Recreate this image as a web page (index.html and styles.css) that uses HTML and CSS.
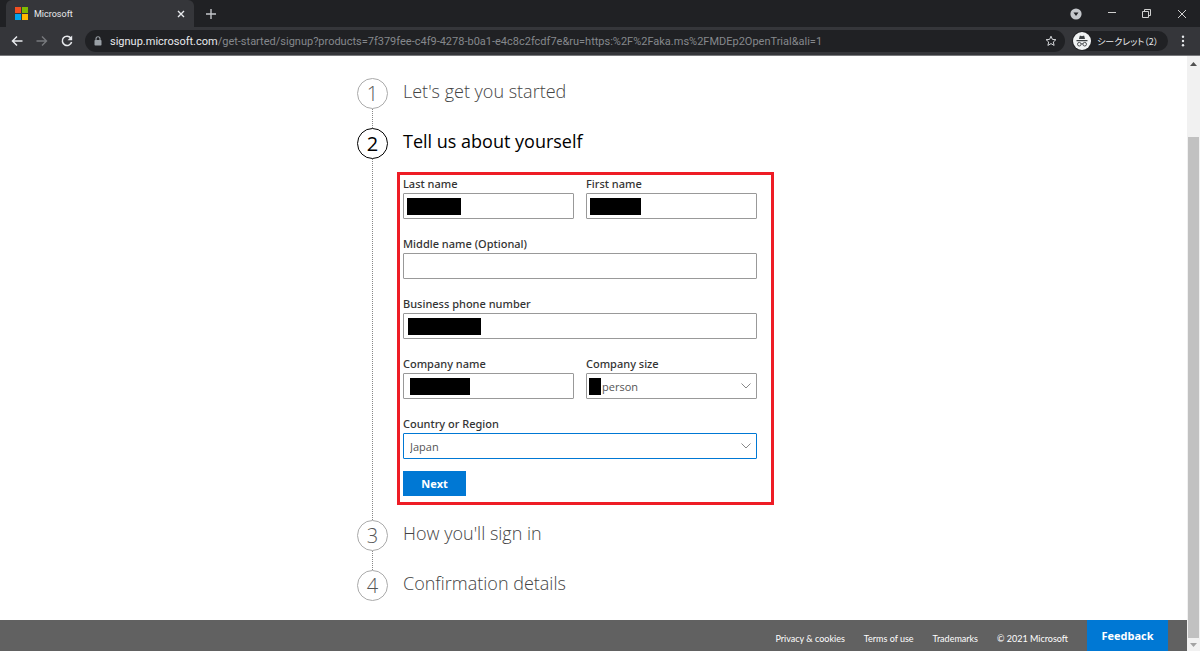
FILE: index.html
```html
<!DOCTYPE html>
<html lang="en">
<head>
    <meta charset="UTF-8">
    <meta name="viewport" content="width=device-width, initial-scale=1.0">
    <title>Microsoft</title>
    <link rel="stylesheet" href="styles.css">
</head>
<body>

    <!-- Browser window -->
    <header class="browser">
        <div class="tab-strip">
            <div class="tab">
                <svg class="tab-logo" width="13" height="13" viewBox="0 0 13 13">
                    <rect width="6" height="6" fill="#f25022"/>
                    <rect x="7" width="6" height="6" fill="#7fba00"/>
                    <rect y="7" width="6" height="6" fill="#00a4ef"/>
                    <rect x="7" y="7" width="6" height="6" fill="#ffb900"/>
                </svg>
                <span class="tab-title">Microsoft</span>
                <button class="icon-button" aria-label="Close tab">
                    <svg width="8" height="8" viewBox="0 0 8 8"><path d="M1 1l6 6M7 1l-6 6" stroke="#e8eaed" stroke-width="1.4"/></svg>
                </button>
            </div>
            <button class="icon-button new-tab" aria-label="New tab">
                <svg width="10" height="10" viewBox="0 0 10 10"><path d="M5 0v10M0 5h10" stroke="#c4c6ca" stroke-width="1.4"/></svg>
            </button>
            <div class="window-buttons">
                <button class="icon-button" aria-label="Search tabs">
                    <svg width="12" height="12" viewBox="0 0 12 12"><circle cx="6" cy="6" r="5.6" fill="#c4c7cb"/><path d="M3.5 4.5h5L6 8z" fill="#202124"/></svg>
                </button>
                <button class="icon-button" aria-label="Minimize">
                    <svg width="10" height="10" viewBox="0 0 10 10"><path d="M1 3.5h8" stroke="#d0d0d0"/></svg>
                </button>
                <button class="icon-button" aria-label="Restore">
                    <svg width="10" height="10" viewBox="0 0 10 10"><path d="M.5 2.500h6v6h-6zM2.500 2.500v-2h6v6h-2" fill="none" stroke="#d0d0d0"/></svg>
                </button>
                <button class="icon-button" aria-label="Close">
                    <svg width="10" height="10" viewBox="0 0 10 10"><path d="M1 1l8 8M9 1l-8 8" stroke="#d0d0d0"/></svg>
                </button>
            </div>
        </div>
        <div class="toolbar">
            <div class="nav-buttons">
                <button class="icon-button" aria-label="Back">
                    <svg width="12" height="12" viewBox="0 0 12 12"><path d="M11.500 6H1.500M6 1.500L1.500 6 6 10.500" fill="none" stroke="#e8eaed" stroke-width="1.500"/></svg>
                </button>
                <button class="icon-button" aria-label="Forward">
                    <svg width="12" height="12" viewBox="0 0 12 12"><path d="M.5 6h10M6 1.500L10.500 6 6 10.500" fill="none" stroke="#77797d" stroke-width="1.400"/></svg>
                </button>
                <button class="icon-button" aria-label="Reload">
                    <svg width="12" height="12" viewBox="0 0 12 12"><path d="M9.800 3A4.700 4.700 0 1 0 10.600 7" fill="none" stroke="#e8eaed" stroke-width="1.500"/><path d="M11.200.5v4.700H6.500z" fill="#e8eaed"/></svg>
                </button>
            </div>
            <div class="address-bar">
                <svg width="8" height="10" viewBox="0 0 8 10"><rect x=".5" y="4" width="7" height="5.500" rx=".8" fill="#9aa0a6"/><path d="M2 4.500V2.800a2 2 0 0 1 4 0v1.700" fill="none" stroke="#9aa0a6" stroke-width="1.100"/></svg>
                <label for="address">signup.microsoft.com</label>
                <input id="address" type="text" value="/get-started/signup?products=7f379fee-c4f9-4278-b0a1-e4c8c2fcdf7e&amp;ru=https:%2F%2Faka.ms%2FMDEp2OpenTrial&amp;ali=1">
                <button class="icon-button" aria-label="Bookmark this page">
                    <svg width="12" height="12" viewBox="0 0 12 12"><path d="M6 1.200l1.400 3.200 3.500.3-2.600 2.300.8 3.400L6 8.600l-3.100 1.800.8-3.400L1.100 4.700l3.500-.3z" fill="none" stroke="#d5d7da"/></svg>
                </button>
            </div>
            <button class="profile" lang="ja">
                <svg width="18" height="18" viewBox="0 0 18 18">
                    <circle cx="9" cy="9" r="9" fill="#f1f3f4"/>
                    <path d="M6 7l.8-3.200h1.100l1.100.4 1.100-.4h1.100L12 7zM3.500 8h11v1.200h-11z" fill="#3c4043"/>
                    <g fill="none" stroke="#3c4043" stroke-width=".9"><circle cx="6.300" cy="12.200" r="1.800"/><circle cx="11.700" cy="12.200" r="1.800"/><path d="M8.100 12q.9-.7 1.800 0"/></g>
                </svg>
                シークレット（2）
            </button>
            <button class="icon-button" aria-label="Menu">
                <svg width="4" height="12" viewBox="0 0 4 12" fill="#e8eaed"><circle cx="2" cy="1.800" r="1.200"/><circle cx="2" cy="6" r="1.200"/><circle cx="2" cy="10.200" r="1.200"/></svg>
            </button>
        </div>
    </header>

    <div class="viewport">
        <div class="page">
            <main>
                <ol class="steps">
                    <li class="step">
                        <div class="marker"><span class="circle">1</span></div>
                        <div class="step-body"><h2>Let's get you started</h2></div>
                    </li>
                    <li class="step active">
                        <div class="marker"><span class="circle">2</span></div>
                        <div class="step-body">
                            <h2>Tell us about yourself</h2>
                            <form class="details">
                                <div class="row">
                                    <div class="field">
                                        <label for="last-name">Last name</label>
                                        <div class="control">
                                            <input id="last-name" type="text">
                                            <span class="mask mask-last"></span>
                                        </div>
                                    </div>
                                    <div class="field">
                                        <label for="first-name">First name</label>
                                        <div class="control">
                                            <input id="first-name" type="text">
                                            <span class="mask mask-first"></span>
                                        </div>
                                    </div>
                                </div>
                                <div class="field">
                                    <label for="middle-name">Middle name (Optional)</label>
                                    <div class="control">
                                        <input id="middle-name" type="text">
                                    </div>
                                </div>
                                <div class="field">
                                    <label for="phone">Business phone number</label>
                                    <div class="control">
                                        <input id="phone" type="tel">
                                        <span class="mask mask-phone"></span>
                                    </div>
                                </div>
                                <div class="row">
                                    <div class="field">
                                        <label for="company">Company name</label>
                                        <div class="control">
                                            <input id="company" type="text">
                                            <span class="mask mask-company"></span>
                                        </div>
                                    </div>
                                    <div class="field">
                                        <label for="size">Company size</label>
                                        <div class="control">
                                            <select id="size" class="size"><option>person</option></select>
                                            <span class="mask mask-size"></span>
                                            <svg class="chevron" width="10" height="6" viewBox="0 0 10 6"><path d="M.5.5L5 5 9.500.5"/></svg>
                                        </div>
                                    </div>
                                </div>
                                <div class="field">
                                    <label for="country">Country or Region</label>
                                    <div class="control">
                                        <select id="country" class="focused"><option>Japan</option></select>
                                        <svg class="chevron" width="10" height="6" viewBox="0 0 10 6"><path d="M.5.5L5 5 9.500.5"/></svg>
                                    </div>
                                </div>
                                <button class="next" type="button">Next</button>
                            </form>
                        </div>
                    </li>
                    <li class="step">
                        <div class="marker"><span class="circle">3</span></div>
                        <div class="step-body"><h2>How you'll sign in</h2></div>
                    </li>
                    <li class="step">
                        <div class="marker"><span class="circle">4</span></div>
                        <div class="step-body"><h2>Confirmation details</h2></div>
                    </li>
                </ol>
            </main>
            <footer>
                <a href="#">Privacy &amp; cookies</a>
                <a href="#">Terms of use</a>
                <a href="#">Trademarks</a>
                <span>© 2021 Microsoft</span>
                <button class="feedback">Feedback</button>
            </footer>
        </div>
        <div class="scrollbar">
            <svg width="7" height="4" viewBox="0 0 7 4"><path d="M3.500 0L7 4H0z" fill="#505050"/></svg>
            <div class="thumb"></div>
            <svg width="7" height="4" viewBox="0 0 7 4"><path d="M0 0h7L3.500 4z" fill="#a3a3a3"/></svg>
        </div>
    </div>

</body>
</html>
```
FILE: styles.css
```css
* {
    box-sizing: border-box;
}
body {
    margin: 0;
    min-height: 100vh;
    display: flex;
    flex-direction: column;
    font-family: "Open Sans", "Noto Sans", sans-serif;
    font-size: 11px;
    color: #333;
    background-color: #fff;
}
button, input, select {
    font-family: inherit;
    font-size: inherit;
    margin: 0;
}
button {
    border: none;
    padding: 0;
    cursor: pointer;
}
.icon-button {
    display: flex;
    background: none;
}
/* Browser window */
.browser {
    background-color: #35363a;
    border-bottom: 1px solid #77787b;
}
.tab-strip {
    display: flex;
    align-items: center;
    height: 27px;
    padding-left: 6px;
    background-color: #202124;
}
.tab {
    display: flex;
    align-items: center;
    gap: 6px;
    width: 188px;
    height: 27px;
    padding: 0 9px;
    border-radius: 6px 6px 0 0;
    background-color: #35363a;
}
.tab-title {
    flex: 1;
    font-family: Roboto, "Open Sans", sans-serif;
    font-size: 9px;
    color: #e8eaed;
}
.new-tab {
    margin-left: 12px;
}
.window-buttons {
    display: flex;
    align-items: center;
    gap: 25px;
    margin-left: auto;
    padding-right: 13px;
}
.toolbar {
    display: flex;
    align-items: center;
    height: 28px;
    padding: 0 15px 0 11px;
}
.nav-buttons {
    display: flex;
    gap: 13px;
    width: 74px;
}
.address-bar {
    flex: 1;
    display: flex;
    align-items: center;
    height: 22px;
    margin-right: 7px;
    padding: 0 8px 0 9px;
    border-radius: 11px;
    background-color: #202124;
    color: #e8eaed;
    font-family: Roboto, "Open Sans", sans-serif;
}
.address-bar label {
    margin-left: 8px;
}
.address-bar input {
    flex: 1;
    padding: 0;
    border: none;
    outline: none;
    background: none;
    color: #85888c;
}
.profile {
    display: flex;
    align-items: center;
    gap: 6px;
    width: 96px;
    height: 20px;
    margin-right: 13px;
    padding-left: 1px;
    border-radius: 10px;
    background-color: #202124;
    color: #e8eaed;
    font-family: "Noto Sans CJK JP", sans-serif;
    font-size: 9px;
    font-feature-settings: "palt";
    white-space: nowrap;
}
.profile svg {
    flex-shrink: 0;
}
/* Page */
.viewport {
    flex: 1;
    display: flex;
}
.page {
    flex: 1;
    display: flex;
    flex-direction: column;
}
main {
    flex: 1;
    padding-top: 22px;
}
.steps {
    width: 473px;
    max-width: 100%;
    margin: 0 auto;
    padding: 0;
    list-style: none;
}
.step {
    display: flex;
    gap: 9px;
    min-height: 50px;
}
.marker {
    display: flex;
    flex-direction: column;
    align-items: center;
}
.marker::after {
    content: "";
    flex: 1;
    border-left: 1px dotted #888;
}
.step:last-child .marker::after {
    display: none;
}
.circle {
    width: 31px;
    height: 31px;
    border: 1px solid #aaa;
    border-radius: 50%;
    font-size: 20px;
    font-weight: 300;
    line-height: 29px;
    text-align: center;
    color: #555;
}
.step h2 {
    margin: 0;
    padding-left: 6px;
    font-size: 18px;
    font-weight: 300;
    line-height: 27px;
    color: #444;
}
.active .circle {
    border-color: #000;
    color: #000;
    font-weight: 400;
}
.active h2 {
    color: #000;
    font-weight: 400;
}
.details {
    width: 377px;
    margin: 17px 0 15px;
    padding: 0 14px 6px 3px;
    border: 3px solid #ee1c25;
}
.row {
    display: grid;
    grid-template-columns: 1fr 1fr;
    gap: 12px;
}
.field {
    margin-bottom: 16px;
}
.field label {
    display: block;
    line-height: 18px;
    font-family: "Noto Sans", "Open Sans", sans-serif;
    font-weight: 500;
}
.control {
    position: relative;
}
.control input, .control select {
    display: block;
    width: 100%;
    height: 26px;
    padding: 0 6px;
    border: 1px solid #999;
    border-radius: 1px;
    outline: none;
    appearance: none;
    background-color: #fff;
    color: #555;
}
.control .size {
    padding-left: 15px;
}
.control .focused {
    border-color: #0078d4;
}
/* Black boxes over the private values */
.mask {
    position: absolute;
    top: 5px;
    height: 17px;
    background-color: #000;
}
.mask-last {
    left: 4px;
    width: 54px;
}
.mask-first {
    left: 4px;
    width: 51px;
}
.mask-phone {
    left: 5px;
    width: 73px;
}
.mask-company {
    left: 7px;
    width: 60px;
}
.mask-size {
    left: 3px;
    width: 12px;
}
.chevron {
    position: absolute;
    top: 10px;
    right: 6px;
    fill: none;
    stroke: #888;
    pointer-events: none;
}
.next {
    display: block;
    width: 63px;
    height: 25px;
    margin-top: -4px;
    background-color: #0078d4;
    color: #fff;
    font-weight: 700;
}
footer {
    display: flex;
    justify-content: flex-end;
    align-items: center;
    gap: 19px;
    height: 31px;
    padding-right: 19px;
    background-color: #616161;
    color: #fff;
    font-size: 9px;
}
footer a, footer span {
    padding-top: 5px;
    color: #fff;
    font-family: Lato, "Open Sans", sans-serif;
    text-decoration: none;
}
.feedback {
    width: 81px;
    align-self: stretch;
    background-color: #0078d4;
    color: #fff;
    font-size: 11px;
    font-weight: 700;
}
.scrollbar {
    display: flex;
    flex-direction: column;
    align-items: center;
    width: 13px;
    padding: 6px 0 4px;
    background-color: #f1f1f1;
}
.thumb {
    flex: 1;
    width: 11px;
    margin: 71px 0 5px;
    background-color: #c1c1c1;
}
```
